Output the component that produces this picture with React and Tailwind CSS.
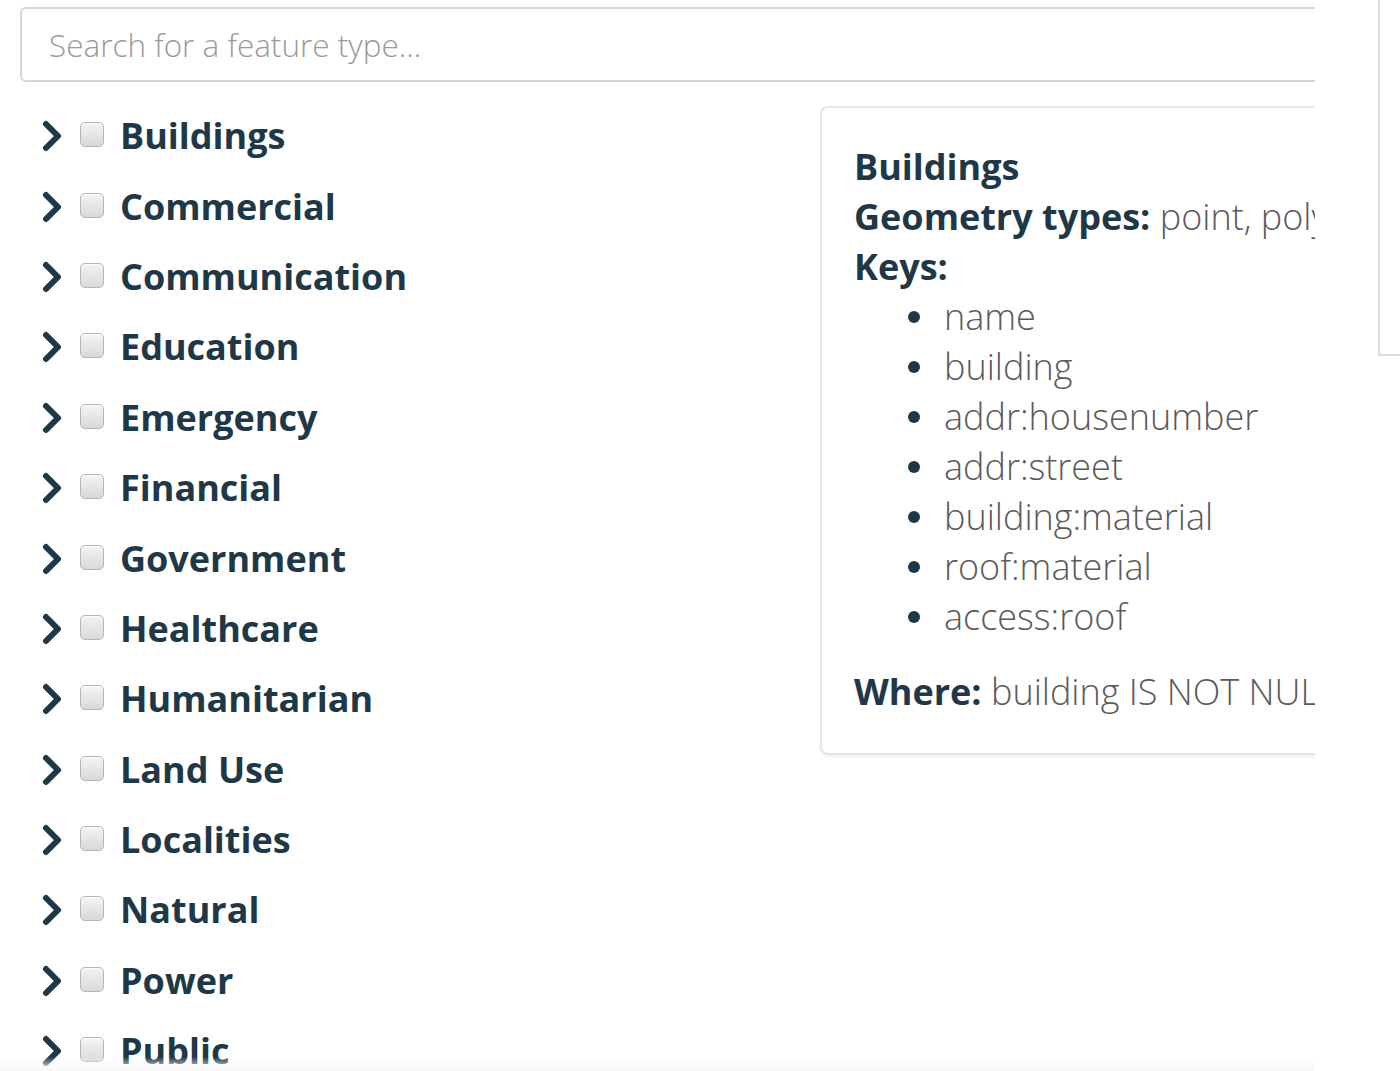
import React from "react";

const categories = [
  "Buildings",
  "Commercial",
  "Communication",
  "Education",
  "Emergency",
  "Financial",
  "Government",
  "Healthcare",
  "Humanitarian",
  "Land Use",
  "Localities",
  "Natural",
  "Power",
  "Public",
];

const keys = [
  "name",
  "building",
  "addr:housenumber",
  "addr:street",
  "building:material",
  "roof:material",
  "access:roof",
];

function Chevron() {
  return (
    <svg width="24" height="32" viewBox="0 0 24 32" className="shrink-0">
      <polyline
        points="6,4 18,16 6,28"
        fill="none"
        stroke="#1f3847"
        strokeWidth="6"
        strokeLinecap="round"
        strokeLinejoin="round"
      />
    </svg>
  );
}

function Checkbox() {
  return (
    <span className="block w-[24px] h-[25px] shrink-0 rounded-[5px] border border-[#b5b5b5] bg-gradient-to-b from-[#f4f4f4] to-[#d9d9d9] shadow-[inset_0_1px_1px_rgba(255,255,255,0.8)]" />
  );
}

export default function App() {
  return (
    <div
      className="relative w-[1400px] h-[1071px] overflow-hidden bg-white"
      style={{ fontFamily: '"Open Sans", "Liberation Sans", sans-serif' }}
    >
      {/* panel to the right, mostly off screen */}
      <div className="absolute left-[1378px] top-0 w-[100px] h-[356px] border-l-2 border-b-2 border-[#dcdcdc]" />

      <div className="w-[1315px] h-full overflow-hidden">
        <div className="pt-[7px] pl-[20px]">
          <div className="w-[1360px] h-[75px] rounded-[6px] border-2 border-[#d6d6d6] flex items-center pl-[27px] text-[31.5px] font-light text-[#9a9a9a]">
            Search for a feature type...
          </div>
        </div>

        <div className="flex mt-[19px]">
          <ul className="w-[820px] shrink-0 pl-[40px]">
            {categories.map((c) => (
              <li key={c} className="flex items-center h-[70.4px]">
                <Chevron />
                <span className="ml-[16px] -mt-[3px]">
                  <Checkbox />
                </span>
                <span className="ml-[16px] text-[36px] font-bold text-[#1f3847] leading-none">
                  {c}
                </span>
              </li>
            ))}
          </ul>

          <div className="mt-[5px] self-start w-[560px] shrink-0 rounded-l-[8px] border-2 border-r-0 border-[#e6e6e6] shadow-[0_2px_3px_rgba(0,0,0,0.06)] pl-[32px] pt-[34px] pb-[36px] text-[36px] leading-[50px] text-[#1f3847] whitespace-nowrap">
            <div className="font-bold">Buildings</div>
            <div>
              <span className="font-bold">Geometry types: </span>
              <span className="font-light text-[#5a5a5a]">point, polygon</span>
            </div>
            <div className="font-bold">Keys:</div>
            <ul className="mb-[25px] pl-[54px]">
              {keys.map((k) => (
                <li key={k} className="flex items-center">
                  <span className="w-[12px] h-[12px] rounded-full bg-[#1f3847] shrink-0" />
                  <span className="ml-[24px] font-light text-[#5a5a5a]">{k}</span>
                </li>
              ))}
            </ul>
            <div>
              <span className="font-bold">Where: </span>
              <span className="font-light text-[#5a5a5a]">building IS NOT NULL</span>
            </div>
          </div>
        </div>
      </div>

      <div className="absolute left-0 bottom-0 w-[1315px] h-[14px] bg-gradient-to-b from-transparent to-[#f7f7f7]" />
    </div>
  );
}
